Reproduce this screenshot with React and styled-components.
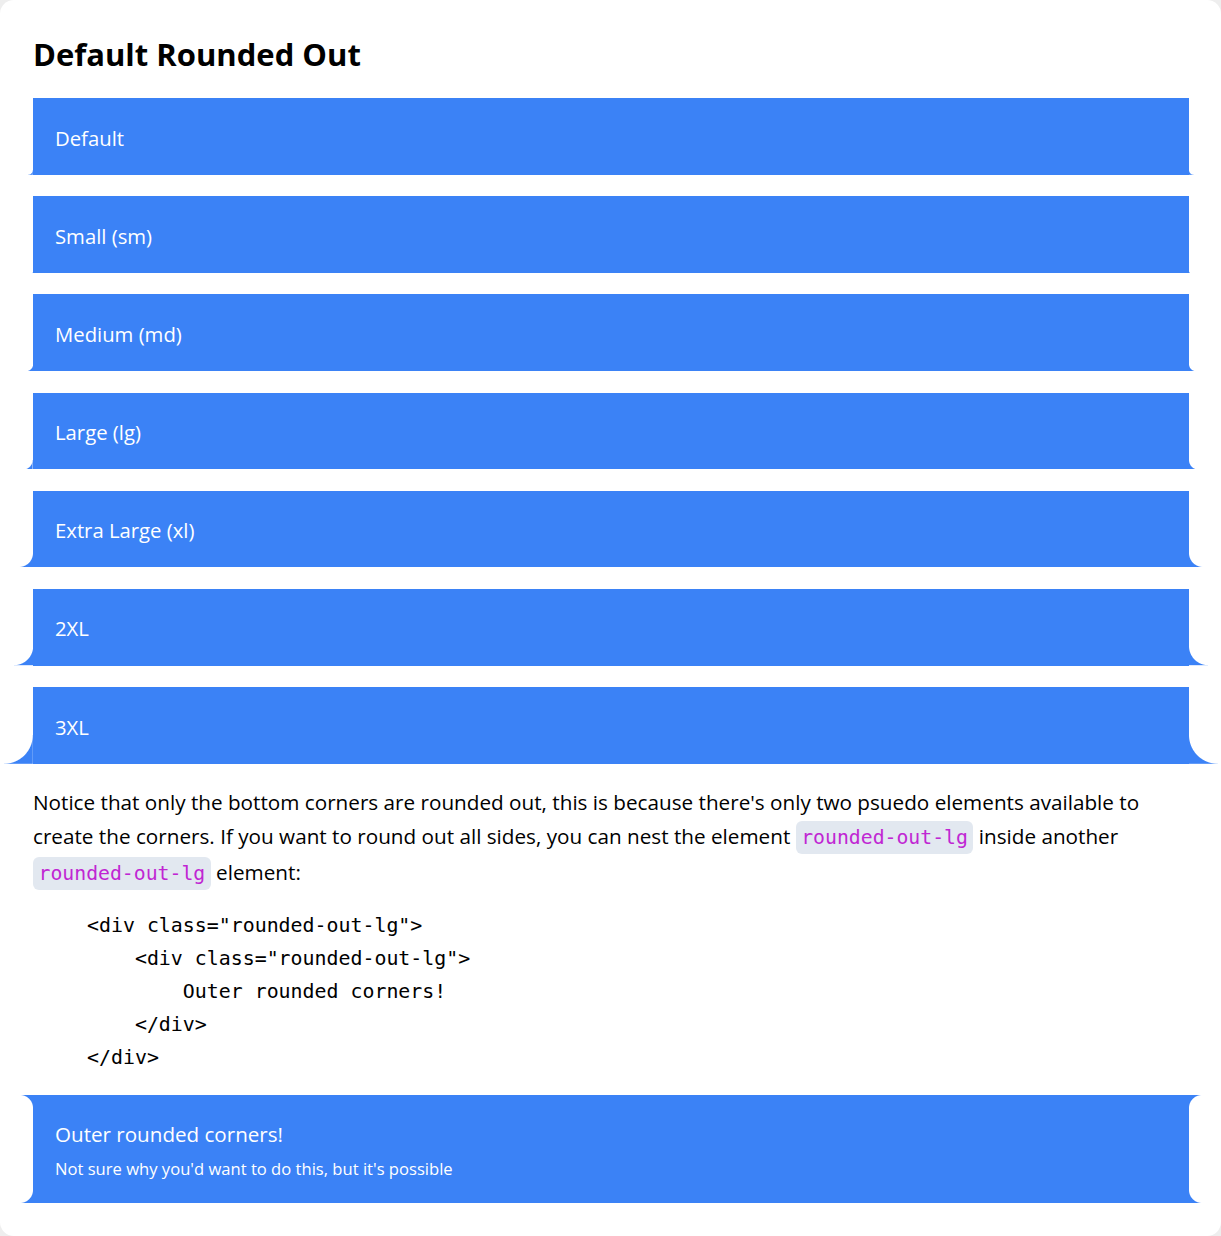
import React from 'react';
import styled, { createGlobalStyle } from 'styled-components';

const BLUE = '#3b82f6';

const Global = createGlobalStyle`
  html, body { margin: 0; padding: 0; background: #eeeeee; }
  body { font-family: "Open Sans", "Noto Sans", sans-serif; color: #000; }
  * { box-sizing: border-box; }
`;

const Card = styled.main`
  background: #fff;
  border-radius: 14px;
  min-height: 1236px;
  padding: 32px 32px 33px 33px;
`;

const Title = styled.h1`
  margin: 0 0 22px;
  font-size: 31px;
  line-height: 44px;
  font-weight: 700;
`;

const Stack = styled.div`
  display: flex;
  flex-direction: column;
  gap: 21.4px;
`;

const Bar = styled.div`
  position: relative;
  background: ${BLUE};
  color: #fff;
  padding: ${(p) => (p.$tall ? '24.5px 22px 21px' : '24.6px 22px 22.2px')};
  font-size: 20.3px;
  line-height: 30px;

  &::before,
  &::after {
    content: '';
    position: absolute;
    bottom: 0;
    width: ${(p) => p.$r}px;
    height: ${(p) => (p.$top ? '100%' : `${p.$r}px`)};
    background-repeat: no-repeat;
    background-size: ${(p) => p.$r}px ${(p) => p.$r}px;
  }
  &::before {
    left: -${(p) => p.$r}px;
    background-image: ${(p) =>
      `radial-gradient(circle at 0 0, transparent ${p.$r - 0.5}px, ${BLUE} ${p.$r + 0.5}px)` +
      (p.$top ? `, radial-gradient(circle at 0 100%, transparent ${p.$r - 0.5}px, ${BLUE} ${p.$r + 0.5}px)` : '')};
    background-position: ${(p) => (p.$top ? 'left bottom, left top' : 'left bottom')};
  }
  &::after {
    right: -${(p) => p.$r}px;
    background-image: ${(p) =>
      `radial-gradient(circle at 100% 0, transparent ${p.$r - 0.5}px, ${BLUE} ${p.$r + 0.5}px)` +
      (p.$top ? `, radial-gradient(circle at 100% 100%, transparent ${p.$r - 0.5}px, ${BLUE} ${p.$r + 0.5}px)` : '')};
    background-position: ${(p) => (p.$top ? 'right bottom, right top' : 'right bottom')};
  }
`;

const Paragraph = styled.p`
  margin: 21px 0 0;
  font-size: 20.7px;
  line-height: 34px;
`;

const Code = styled.code`
  font-family: "DejaVu Sans Mono", "Liberation Mono", monospace;
  font-size: 19.8px;
  background: #e2e8f0;
  color: #c026d3;
  border-radius: 6px;
  padding: 5px 5.5px;
  white-space: nowrap;
`;

const Pre = styled.pre`
  margin: 18px 0 21px;
  padding-left: 54px;
  font-family: "DejaVu Sans Mono", "Liberation Mono", monospace;
  font-size: 19.9px;
  line-height: 33px;
`;

const BoxTitle = styled.div`
  font-size: 20.6px;
  line-height: 30px;
`;

const BoxSub = styled.div`
  margin-top: 7px;
  font-size: 16.6px;
  line-height: 26px;
`;

const sizes = [
  ['Default', 4.8],
  ['Small (sm)', 2.4],
  ['Medium (md)', 7.2],
  ['Large (lg)', 9.6],
  ['Extra Large (xl)', 14],
  ['2XL', 19.2],
  ['3XL', 28.8],
];

const code = `<div class="rounded-out-lg">
    <div class="rounded-out-lg">
        Outer rounded corners!
    </div>
</div>`;

export default function App() {
  return (
    <>
      <Global />
      <Card>
        <Title>Default Rounded Out</Title>
        <Stack>
          {sizes.map(([label, r]) => (
            <Bar key={label} $r={r}>
              {label}
            </Bar>
          ))}
        </Stack>
        <Paragraph>
          Notice that only the bottom corners are rounded out, this is because there's only two psuedo elements
          available to create the corners. If you want to round out all sides, you can nest the element{' '}
          <Code>rounded-out-lg</Code> inside another <Code>rounded-out-lg</Code> element:
        </Paragraph>
        <Pre>{code}</Pre>
        <Bar $r={13} $top $tall>
          <BoxTitle>Outer rounded corners!</BoxTitle>
          <BoxSub>Not sure why you'd want to do this, but it's possible</BoxSub>
        </Bar>
      </Card>
    </>
  );
}
